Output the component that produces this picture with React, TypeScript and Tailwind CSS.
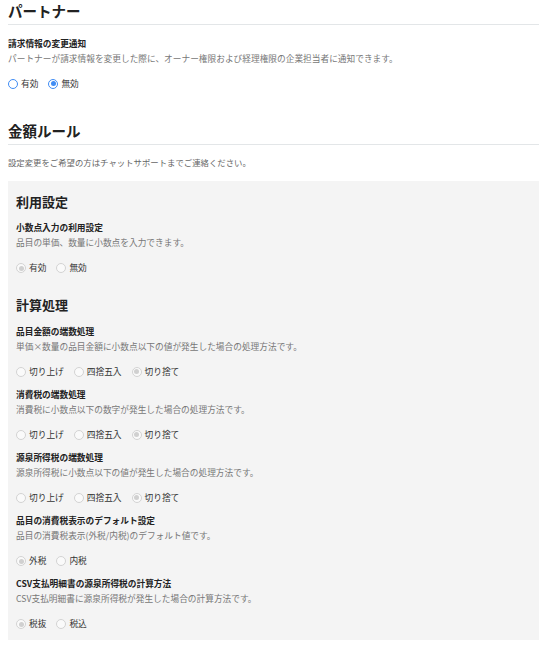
type RadioProps = {
  label: string;
  checked?: boolean;
  disabled?: boolean;
};

// small radio, blue when editable and grey when locked
function Radio({ label, checked, disabled }: RadioProps) {
  const ring = disabled
    ? "border-[#d3d3d3] bg-[#fafafa]"
    : "border-[#3f8cf4] bg-white";
  const dot = disabled ? "bg-[#d0d0d0]" : "bg-[#3f8cf4]";

  return (
    <label className="flex items-center gap-[3px]">
      <span
        className={`flex h-[10px] w-[10px] items-center justify-center rounded-full border-[1.5px] ${ring}`}
      >
        {checked && <span className={`h-[5px] w-[5px] rounded-full ${dot}`} />}
      </span>
      <span className="text-[8.7px] leading-[12px] text-[#333]">{label}</span>
    </label>
  );
}

type FieldProps = {
  title: string;
  desc: string;
  options: string[];
  selected: number;
  disabled?: boolean;
  className?: string;
};

function Field({ title, desc, options, selected, disabled, className }: FieldProps) {
  return (
    <div className={className}>
      <p className="text-[8.7px] font-bold leading-[15px] text-[#222]">{title}</p>
      <p className="text-[8.7px] leading-[15px] text-[#777]">{desc}</p>
      <div className="mt-[12px] flex h-[12px] items-center gap-[10px]">
        {options.map((opt, i) => (
          <Radio key={opt} label={opt} checked={i === selected} disabled={disabled} />
        ))}
      </div>
    </div>
  );
}

const rounding = ["切り上げ", "四捨五入", "切り捨て"];

export default function App() {
  return (
    <div className="min-h-screen w-full bg-white pl-2 pr-[2px] font-['Noto_Sans_CJK_JP','Noto_Sans',sans-serif]">
      {/* パートナー */}
      <h2 className="border-b border-[#e3e6e8] pb-[2px] text-[14.5px] font-bold leading-[22px] text-[#222]">
        パートナー
      </h2>
      <Field
        className="mt-[10.5px]"
        title="請求情報の変更通知"
        desc="パートナーが請求情報を変更した際に、オーナー権限および経理権限の企業担当者に通知できます。"
        options={["有効", "無効"]}
        selected={1}
      />

      {/* 金額ルール */}
      <h2 className="mt-[30px] border-b border-[#e3e6e8] pb-[2px] text-[14.5px] font-bold leading-[22px] text-[#222]">
        金額ルール
      </h2>
      <p className="mt-[10.5px] text-[8.4px] leading-[15px] text-[#666]">
        設定変更をご希望の方はチャットサポートまでご連絡ください。
      </p>

      <div className="mt-[10.5px] bg-[#f4f4f4] px-2 pb-[10px] pt-[11px]">
        <h3 className="text-[13px] font-bold leading-[20px] text-[#222]">利用設定</h3>
        <Field
          className="mt-[8.5px]"
          title="小数点入力の利用設定"
          desc="品目の単価、数量に小数点を入力できます。"
          options={["有効", "無効"]}
          selected={0}
          disabled
        />

        <h3 className="mt-[21px] text-[13px] font-bold leading-[20px] text-[#222]">計算処理</h3>
        <Field
          className="mt-[8.5px]"
          title="品目金額の端数処理"
          desc="単価×数量の品目金額に小数点以下の値が発生した場合の処理方法です。"
          options={rounding}
          selected={2}
          disabled
        />
        <Field
          className="mt-[9.2px]"
          title="消費税の端数処理"
          desc="消費税に小数点以下の数字が発生した場合の処理方法です。"
          options={rounding}
          selected={2}
          disabled
        />
        <Field
          className="mt-[9.2px]"
          title="源泉所得税の端数処理"
          desc="源泉所得税に小数点以下の値が発生した場合の処理方法です。"
          options={rounding}
          selected={2}
          disabled
        />
        <Field
          className="mt-[9.2px]"
          title="品目の消費税表示のデフォルト設定"
          desc="品目の消費税表示(外税/内税)のデフォルト値です。"
          options={["外税", "内税"]}
          selected={0}
          disabled
        />
        <Field
          className="mt-[9.2px]"
          title="CSV支払明細書の源泉所得税の計算方法"
          desc="CSV支払明細書に源泉所得税が発生した場合の計算方法です。"
          options={["税抜", "税込"]}
          selected={0}
          disabled
        />
      </div>
    </div>
  );
}
